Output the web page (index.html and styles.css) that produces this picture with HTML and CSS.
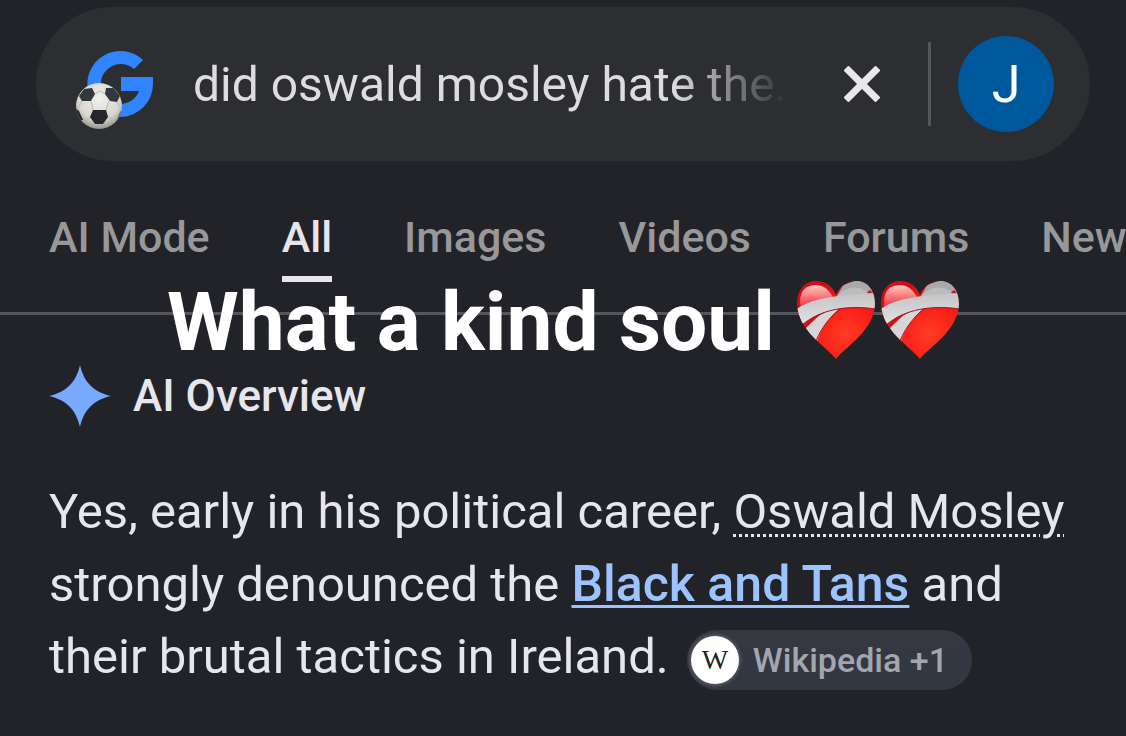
FILE: index.html
```html
<!DOCTYPE html>
<html lang="en">
<head>
<meta charset="UTF-8" />
<meta name="viewport" content="width=device-width, initial-scale=1"/>
<title>did oswald mosley hate the - Search</title>
<link rel="stylesheet" href="styles.css">
</head>
<body>
  <header>
    <form class="search" role="search">
      <svg class="logo" viewBox="0 -12 80 92" role="img" aria-label="Google">
        <defs>
          <radialGradient id="ballShade" cx="50%" cy="35%" r="65%">
            <stop offset="0" stop-color="#f2f2ee"/>
            <stop offset="0.7" stop-color="#d6d6d0"/>
            <stop offset="1" stop-color="#94948c"/>
          </radialGradient>
          <clipPath id="ballClip"><circle cx="24" cy="56" r="23"/></clipPath>
        </defs>
        <path fill="#3183ff" d="M68 10A33 33 0 1 0 45 67A33 33 0 0 0 78 34V27H46V41H64A20 20 0 0 1 45 54A20 20 0 1 1 59 19Z"/>
        <circle cx="24" cy="56" r="23" fill="url(#ballShade)"/>
        <g clip-path="url(#ballClip)">
          <path fill="none" stroke="#b9b8b2" stroke-width="1" d="M20 44L25 41L31 44M16 51L18 60M34 51L31 60M16 67L10 71M33 66L39 70M7 51L3 58M42 52L46 58"/>
          <path fill="#33383f" d="M9 39L17 38L20 44L16 51L7 51L4 46Z"/>
          <path fill="#33383f" d="M39 38L31 38L30 44L35 51L42 52L45 46Z"/>
          <path fill="#23272b" d="M18 60H31L33 67L28 74H20L15 67Z"/>
          <path fill="#23272b" d="M0 58L4 61L8 70L4 70Z"/>
          <path fill="#5a5e60" d="M47 60L45 62L42 70L46 66Z"/>
        </g>
      </svg>
      <input class="query" type="text" aria-label="Search" value="did oswald mosley hate the...">
      <button class="clear" type="button" aria-label="Clear">
        <svg viewBox="0 0 36 36"><path d="M2 2L34 34M34 2L2 34" stroke="#e8e8ec" stroke-width="7"/></svg>
      </button>
      <span class="divider"></span>
      <button class="avatar" type="button" aria-label="Account">J</button>
    </form>

    <nav class="tabs" aria-label="Search types">
      <a href="#">AI Mode</a>
      <a href="#" class="active" aria-current="page">All</a>
      <a href="#">Images</a>
      <a href="#">Videos</a>
      <a href="#">Forums</a>
      <a href="#">News</a>
    </nav>
  </header>

  <div class="caption">
    <span>What a kind soul</span>
    <svg class="heart" viewBox="0 0 78 78" role="img" aria-label="Mending heart">
      <defs>
        <radialGradient id="heartRed" cx="62%" cy="68%" r="70%">
          <stop offset="0" stop-color="#ff3c24"/>
          <stop offset="0.55" stop-color="#f81d17"/>
          <stop offset="1" stop-color="#d10d18"/>
        </radialGradient>
        <linearGradient id="heartShine" x1="0" y1="0" x2="0" y2="1">
          <stop offset="0" stop-color="#ffc9c4"/>
          <stop offset="0.7" stop-color="#f5525a"/>
          <stop offset="1" stop-color="#f5323a"/>
        </linearGradient>
        <linearGradient id="bandage" x1="0" y1="0" x2="0" y2="1">
          <stop offset="0" stop-color="#c4c4c6"/>
          <stop offset="1" stop-color="#e2e2e3"/>
        </linearGradient>
        <clipPath id="heartClip">
          <path d="M39 78C29 65 1 50 0 23C0 8 9 0 19 0C29 0 36 6 39 14C42 6 50 0 60 0C70 0 78 9 78 23C77 50 49 65 39 78Z"/>
        </clipPath>
        <g id="heart" clip-path="url(#heartClip)">
          <rect width="78" height="78" fill="url(#heartRed)"/>
          <path fill="url(#heartShine)" d="M3 21C3 9 10 4 19 4C27 4 32 9 36 16L4 28Z"/>
          <path fill="#a9a9ac" d="M39 17L46 4L60 -1H78V14Z"/>
          <path fill="#d9101c" d="M68 13L73 9L77 13Z"/>
          <path fill="#bcbcbe" d="M40 15C48 6 60 4 69 10L72 14L40 16Z"/>
          <path fill="#d6d6d8" d="M9 47L26 31L44 26C35 34 25 45 20 60L10 54Z"/>
          <path fill="none" stroke="#a40c14" stroke-width="1" d="M44 27C35 34 25 45 19 60"/>
          <path fill="none" stroke="#c8101a" stroke-width="2" d="M8 46C13 39 19 34 27 31"/>
          <path fill="url(#bandage)" d="M0 28C16 16 46 14 79 12V28C50 24 24 28 5 44Z"/>
          <path fill="none" stroke="#98171c" stroke-width="1" d="M5 44C24 28 50 24 79 28"/>
        </g>
      </defs>
      <use href="#heart"/>
    </svg>
    <svg class="heart" viewBox="0 0 78 78" role="img" aria-label="Mending heart">
      <use href="#heart"/>
    </svg>
  </div>

  <main>
    <h2>
      <svg class="spark" viewBox="0 0 60 60" aria-hidden="true"><path fill="#77a9ff" d="M30 0C34 17 43 26 60 30C43 34 34 43 30 60C26 43 17 34 0 30C17 26 26 17 30 0Z"/></svg>
      AI Overview
    </h2>
    <p>
      Yes, early in his political career, <a href="#" class="entity">Oswald Mosley</a>
      strongly denounced the <a href="#" class="link">Black and Tans</a> and
      their brutal tactics in Ireland.
      <button class="source" type="button"><span class="wiki">W</span>Wikipedia +1</button>
    </p>
  </main>
</body>
</html>
```
FILE: styles.css
```css
* {
  box-sizing: border-box;
}
body {
  margin: 0;
  min-height: 100vh;
  background: #222328;
  color: #e6e6ee;
  font-family: Roboto, "Open Sans", sans-serif;
  overflow-x: hidden;
  position: relative;
}
a {
  color: inherit;
  text-decoration: none;
}
button {
  border: none;
  padding: 0;
  background: none;
  font-family: inherit;
  cursor: pointer;
}
svg {
  display: block;
}

/* Search bar */
header {
  padding-top: 7px;
  border-bottom: 3px solid #55565b;
}
.search {
  display: flex;
  align-items: center;
  height: 154px;
  margin: 0 36px;
  padding: 0 36px 0 39px;
  border-radius: 77px;
  background: #2d2e32;
}
.logo {
  width: 80px;
  height: 92px;
  flex: none;
}
.query {
  flex: 1;
  min-width: 0;
  margin-left: 38px;
  padding: 0;
  border: none;
  outline: none;
  background: none;
  color: #dcdce2;
  font-family: inherit;
  font-size: 48px;
  -webkit-mask-image: linear-gradient(to right, #000 80%, transparent 99%);
  mask-image: linear-gradient(to right, #000 80%, transparent 99%);
}
.clear {
  width: 36px;
  height: 36px;
  margin-left: 50px;
}
.divider {
  width: 3px;
  height: 84px;
  margin: 0 27px 0 48px;
  background: #55565b;
}
.avatar {
  width: 96px;
  height: 96px;
  border-radius: 50%;
  background: #00589c;
  color: #fff;
  font-size: 52px;
}

/* Tabs */
.tabs {
  display: flex;
  gap: 72px;
  height: 151px;
  padding: 48px 0 0 49px;
  overflow: hidden;
  white-space: nowrap;
  color: #98989b;
  font-size: 43px;
  font-weight: 500;
  line-height: 56px;
}
.tabs a {
  flex: none;
  height: 73px;
}
.tabs .active {
  color: #e6e6ea;
  border-bottom: 6px solid #e6e6ea;
}

/* Caption laid over the page */
.caption {
  position: absolute;
  top: 270px;
  left: 0;
  right: 0;
  display: flex;
  justify-content: center;
  align-items: center;
  gap: 6px;
  height: 100px;
  color: #fff;
  font-size: 82px;
  font-weight: 700;
}
.caption span {
  margin-right: 16px;
  padding-top: 4px;
}
.heart {
  width: 78px;
  height: 78px;
}

/* AI overview */
main {
  padding: 50px 49px 40px;
}
h2 {
  display: flex;
  align-items: center;
  gap: 22px;
  margin: 0 0 49px;
  font-size: 44px;
  font-weight: 500;
  line-height: 62px;
}
.spark {
  width: 62px;
  height: 62px;
}
p {
  margin: 0;
  font-size: 49px;
  line-height: 72px;
}
.entity {
  text-decoration: underline dotted 3px;
  text-underline-offset: 6px;
}
.link {
  color: #9dc3ff;
  font-size: 50px;
  font-weight: 500;
  text-decoration: underline 3px;
  text-underline-offset: 4px;
}
.source {
  display: inline-flex;
  align-items: center;
  gap: 14px;
  height: 60px;
  margin-left: 6px;
  padding: 0 24px 0 4px;
  border-radius: 30px;
  background: linear-gradient(#363741, #313842);
  color: #a4a6ae;
  font-size: 34px;
  font-weight: 500;
  vertical-align: middle;
}
.wiki {
  width: 48px;
  height: 48px;
  border-radius: 50%;
  background: #fff;
  box-shadow: 0 0 3px 2px #55565b;
  color: #222;
  font-family: "Liberation Serif", serif;
  font-size: 28px;
  font-weight: 400;
  line-height: 48px;
}
```
